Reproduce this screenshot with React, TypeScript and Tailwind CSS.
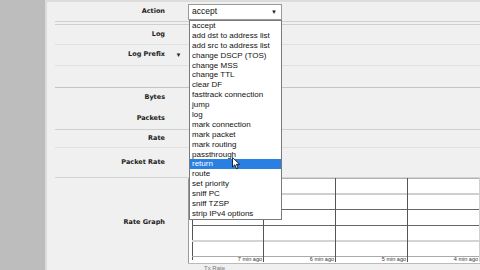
import React from 'react';

const actions = [
  'accept',
  'add dst to address list',
  'add src to address list',
  'change DSCP (TOS)',
  'change MSS',
  'change TTL',
  'clear DF',
  'fasttrack connection',
  'jump',
  'log',
  'mark connection',
  'mark packet',
  'mark routing',
  'passthrough',
  'return',
  'route',
  'set priority',
  'sniff PC',
  'sniff TZSP',
  'strip IPv4 options',
];

const labelFont = { fontFamily: '"DejaVu Sans", Verdana, sans-serif' };
const listFont = { fontFamily: '"Liberation Sans", Arial, sans-serif' };

function Label({ children }: { children: React.ReactNode }) {
  return (
    <div className="w-[110px] text-right text-[6.5px] font-bold text-[#222]" style={labelFont}>
      {children}
    </div>
  );
}

function RateGraph() {
  const ticks = [
    { x: 75, label: '7 min ago' },
    { x: 147, label: '6 min ago' },
    { x: 219, label: '5 min ago' },
    { x: 291, label: '4 min ago' },
  ];
  return (
    <svg width="292" height="92" className="block">
      <rect x="0" y="0" width="292" height="86" fill="#ffffff" />
      <line x1="0.5" y1="0" x2="0.5" y2="86" stroke="#9a9a9a" />
      <line x1="0" y1="0.5" x2="292" y2="0.5" stroke="#b0b0b0" />
      <line x1="4.5" y1="0" x2="4.5" y2="82" stroke="#555" />
      <line x1="4" y1="16" x2="292" y2="16" stroke="#cfcfcf" strokeWidth="2" />
      <line x1="4" y1="31.5" x2="292" y2="31.5" stroke="#666" />
      <line x1="4" y1="47.5" x2="292" y2="47.5" stroke="#666" />
      <line x1="4" y1="63" x2="292" y2="63" stroke="#d4d4d4" strokeWidth="2" />
      <line x1="4" y1="78.5" x2="292" y2="78.5" stroke="#aaa" />
      {ticks.map((t) => (
        <line key={t.x} x1={t.x + 0.5} y1="0" x2={t.x + 0.5} y2="84" stroke={t.x > 280 ? '#d0d0d0' : '#555'} />
      ))}
      {ticks.map((t) => (
        <text
          key={t.label}
          x={t.x - 1}
          y="83"
          textAnchor="end"
          fontSize="5.5"
          fill="#333"
          style={listFont}
        >
          {t.label}
        </text>
      ))}
      <line x1="0" y1="85.5" x2="292" y2="85.5" stroke="#bbb" />
      <text x="16" y="92" fontSize="6" fill="#777" style={listFont}>
        Tx Rate
      </text>
    </svg>
  );
}

function Cursor() {
  return (
    <svg width="9" height="13" viewBox="0 0 9 13" className="absolute left-[42px] top-[-2px]">
      <path d="M0.5 0.5 L0.5 10 L2.8 7.8 L4.5 11.8 L6 11.1 L4.4 7.3 L7.6 7.3 Z" fill="#fff" stroke="#000" strokeWidth="0.8" strokeLinejoin="round" />
    </svg>
  );
}

export default function App() {
  return (
    <div className="w-[480px] h-[270px] overflow-hidden flex bg-[#f0f0f0]">
      <div className="w-[45px] shrink-0 bg-[#bdbdbd]" />
      <div className="w-[2px] shrink-0 bg-[#dcdcdc]" />
      <div className="relative flex-1 border-t-2 border-[#dcdcdc]">
        <div className="ml-[8px]">
          <div className="flex items-center h-[23px] border-b-4 border-double border-[#cfcfcf]">
            <Label>Action</Label>
            <div className="w-[23px]" />
            <div
              className="relative w-[94px] h-[16px] bg-white border border-[#9a9a9a] flex items-center pl-[3px] text-[8.5px] text-[#111]"
              style={listFont}
            >
              accept
              <span className="absolute right-[4px] top-[3px] text-[6px] text-[#222]">▼</span>
            </div>
          </div>
          <div className="flex items-center h-[20px] border-b border-[#e0e0e0]">
            <Label>Log</Label>
          </div>
          <div className="flex items-center h-[21px] border-b border-[#e0e0e0]">
            <Label>Log Prefix</Label>
            <div className="w-[23px] flex justify-center text-[6px] text-[#222] pl-[4px]">▼</div>
          </div>
          <div className="h-[22px] border-b border-[#c4c4c4]" />
          <div className="flex items-center h-[20px]">
            <Label>Bytes</Label>
          </div>
          <div className="flex items-center h-[22px] border-b border-[#d0d0d0]">
            <Label>Packets</Label>
          </div>
          <div className="flex items-center h-[18px] border-b border-[#e0e0e0]">
            <Label>Rate</Label>
          </div>
          <div className="flex items-center h-[30px] border-b border-[#d4d4d4]">
            <Label>Packet Rate</Label>
          </div>
          <div className="flex h-[93px]">
            <div className="self-center pb-[4px]">
              <Label>Rate Graph</Label>
            </div>
            <div className="w-[23px]" />
            <RateGraph />
          </div>
        </div>

        <div
          className="absolute left-[142px] top-[18px] w-[93px] h-[200px] bg-white border border-[#7a7a7a] text-[8px] text-[#111]"
          style={listFont}
        >
          {actions.map((a) => (
            <div
              key={a}
              className={
                a === 'return'
                  ? 'relative h-[9.9px] leading-[9.9px] pl-[2px] bg-[#2a7fe3] text-white'
                  : 'h-[9.9px] leading-[9.9px] pl-[2px]'
              }
            >
              {a}
              {a === 'return' ? <Cursor /> : null}
            </div>
          ))}
        </div>
      </div>
    </div>
  );
}
